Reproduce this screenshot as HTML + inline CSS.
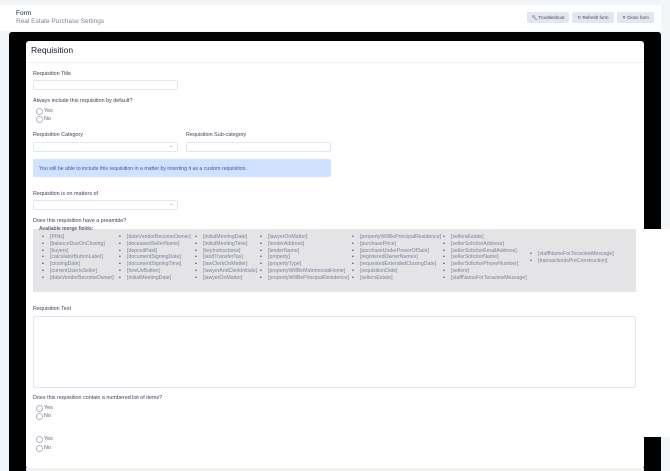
<!DOCTYPE html>
<html><head><style>
*{margin:0;padding:0;box-sizing:border-box}
body{width:670px;height:471px;overflow:hidden;background:#f3f6f9;font-family:"Liberation Sans",sans-serif;position:relative;color:#3f4254}
.a{position:absolute;white-space:nowrap}
.lbl{font-size:5.4px;color:#3f4254}
.inp{position:absolute;border:1px solid #e4e6ef;border-radius:2px;background:#fff}
.r{position:absolute;font-size:5.4px;color:#5e6278}
.r:before{content:"";position:absolute;left:-8px;top:0;width:5px;height:5px;border:0.6px solid #b5b5c3;border-radius:50%}
.btn{position:absolute;top:12px;height:11px;background:#e4e6ef;border-radius:2px;font-size:4.5px;color:#3f4254;line-height:11px;text-align:center}
.col{position:absolute;top:234px;font-size:5.2px;line-height:6.8px;color:#7e8299}
.col div:before{content:"•";position:absolute;margin-left:-8px;color:#3f4254}
.chev{position:absolute;font-size:5px;color:#7e8299}
</style></head><body>
<div class="a" style="left:0;top:5px;width:661px;height:26px;background:#fff"></div>
<div class="a" style="left:16px;top:10px;font-size:6.5px;color:#181c32">Form</div>
<div class="a" style="left:16px;top:18px;font-size:6.5px;color:#7e8299">Real Estate Purchase Settings</div>
<div class="btn" style="left:527px;width:42px">&#x1F527;&#xFE0E; Troubleshoot</div>
<div class="btn" style="left:572px;width:42px">&#x21BB; Refresh form</div>
<div class="btn" style="left:617px;width:37px">✕ Close form</div>

<div class="a" style="left:9px;top:32px;width:652px;height:439px;background:#000;border-radius:3px 3px 0 0"></div>
<div class="a" style="left:0;top:437px;width:9px;height:34px;background:#f3f6f9"></div>
<div class="a" style="left:26px;top:41px;width:618px;height:428px;background:#fff;border-radius:3px"></div>
<div class="a" style="left:644px;top:229px;width:26px;height:208px;background:#fff"></div>
<div class="a" style="left:26px;top:468px;width:618px;height:3px;background:#eef0f5"></div>

<div class="a" style="left:31px;top:45px;font-size:8.5px;color:#181c32">Requisition</div>
<div class="a" style="left:26px;top:62px;width:618px;height:1px;background:#eff2f5"></div>

<div class="a lbl" style="left:33px;top:71px">Requisition Title</div>
<div class="inp" style="left:33px;top:80px;width:145px;height:10px"></div>
<div class="a lbl" style="left:33px;top:98px">Always include this requisition by default?</div>
<div class="r" style="left:44px;top:108px">Yes</div>
<div class="r" style="left:44px;top:116px">No</div>

<div class="a lbl" style="left:33px;top:132px">Requisition Category</div>
<div class="a lbl" style="left:186px;top:132px">Requisition Sub-category</div>
<div class="inp" style="left:33px;top:142px;width:145px;height:10px"></div><div class="chev" style="left:169px;top:143px">⌄</div>
<div class="inp" style="left:186px;top:142px;width:145px;height:10px"></div>
<div class="a" style="left:33px;top:159px;width:298px;height:18px;background:#cfe2ff;border-radius:2px"></div>
<div class="a" style="left:39px;top:166px;font-size:5.2px;color:#3a57a8">You will be able to include this requisition in a matter by inserting it as a custom requisition.</div>

<div class="a lbl" style="left:33px;top:191px">Requisition is on matters of</div>
<div class="inp" style="left:33px;top:200px;width:145px;height:10px"></div><div class="chev" style="left:169px;top:201px">⌄</div>
<div class="a lbl" style="left:33px;top:218px">Does this requisition have a preamble?</div>

<div class="a" style="left:33px;top:229px;width:603px;height:63px;background:#e4e4e6"></div>
<div class="a" style="left:39px;top:226px;font-size:5px;font-weight:bold;color:#5e6278;height:7px;overflow:hidden">Available merge fields:</div>
<div class="col" style="left:50px"><div>[PINs]</div><div>[balanceDueOnClosing]</div><div>[buyers]</div><div>[calculatorButtonLabel]</div><div>[closingDate]</div><div>[currentUserIsSeller]</div><div>[dateVendorBecomeOwner]</div></div>
<div class="col" style="left:127px"><div>[dateVendorBecomeOwner]</div><div>[deceasedSellerName]</div><div>[depositPaid]</div><div>[documentSigningDate]</div><div>[documentSigningTime]</div><div>[hireUsButton]</div><div>[initialMeetingDate]</div></div>
<div class="col" style="left:203px"><div>[initialMeetingDate]</div><div>[initialMeetingTime]</div><div>[keyInstructions]</div><div>[landTransferTax]</div><div>[lawClerkOnMatter]</div><div>[lawyerAndClerkInitials]</div><div>[lawyerOnMatter]</div></div>
<div class="col" style="left:268px"><div>[lawyerOnMatter]</div><div>[lenderAddress]</div><div>[lenderName]</div><div>[property]</div><div>[propertyType]</div><div>[propertyWillBeMatrimonialHome]</div><div>[propertyWillBePrincipalResidence]</div></div>
<div class="col" style="left:360px"><div>[propertyWillBePrincipalResidence]</div><div>[purchasePrice]</div><div>[purchaseUnderPowerOfSale]</div><div>[registeredOwnerNames]</div><div>[requestedExtendedClosingDate]</div><div>[requisitionDate]</div><div>[sellersEstate]</div></div>
<div class="col" style="left:451px"><div>[sellersEstate]</div><div>[sellerSolicitorAddress]</div><div>[sellerSolicitorEmailAddress]</div><div>[sellerSolicitorName]</div><div>[sellerSolicitorPhoneNumber]</div><div>[sellers]</div><div>[staffNameForTeraviewMessage]</div></div>
<div class="col" style="left:538px;top:251px"><div>[staffNameForTeraviewMessage]</div><div>[transactionIsPreConstruction]</div></div>

<div class="a lbl" style="left:33px;top:306px">Requisition Text</div>
<div class="inp" style="left:33px;top:316px;width:603px;height:72px"></div>
<div class="a lbl" style="left:33px;top:395px">Does this requisition contain a numbered list of items?</div>
<div class="r" style="left:44px;top:405px">Yes</div>
<div class="r" style="left:44px;top:413px">No</div>
<div class="r" style="left:44px;top:436px">Yes</div>
<div class="r" style="left:44px;top:445px">No</div>
</body></html>
